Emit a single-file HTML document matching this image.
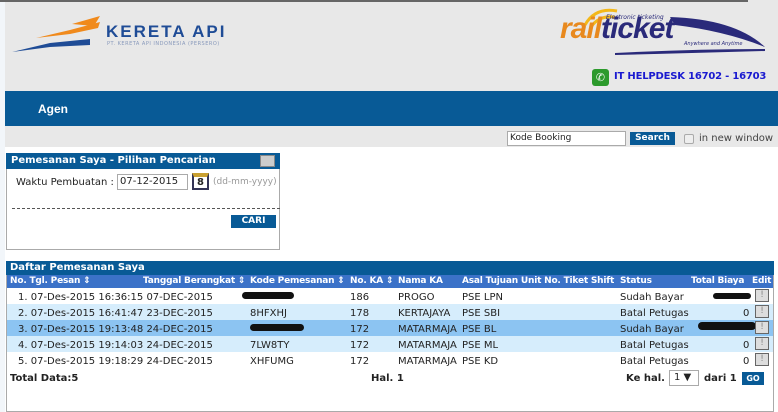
<!DOCTYPE html>
<html><head><meta charset="utf-8"><style>
*{margin:0;padding:0;box-sizing:border-box}
body{width:778px;height:412px;position:relative;background:#fff;font-family:"DejaVu Sans",Verdana,sans-serif;font-size:10px;color:#222;overflow:hidden}
.a{position:absolute;white-space:nowrap}
.b{font-weight:bold}
.h{position:absolute;top:276px;font-weight:bold;font-size:9px;color:#fff;white-space:nowrap;letter-spacing:-0.2px}
.e{position:absolute;left:755px;width:14px;height:13px;background:#ddd;border:1px solid #666;font-size:9px;text-align:center;line-height:11px;color:#888}
</style></head><body>
<div class="a" style="left:0;top:0;width:5px;height:412px;background:#f2f6fa"></div>
<div class="a" style="left:5px;top:0;width:773px;height:147px;background:#e8e8e8"></div>
<div class="a" style="left:0;top:0;width:748px;height:2px;background:#666"></div>
<svg class="a" style="left:10px;top:14px" width="90" height="40" viewBox="0 0 90 40">
<path d="M26 24 L60 16 L90 8 L88 14 L60 20 Z" fill="#f08a1c"/>
<path d="M62 10 L90 2 L84 12 Z" fill="#f08a1c"/>
<path d="M2 38 L40 29 L80 25 L80 31 L40 33 Z" fill="#1f4c96"/>
</svg>
<div class="a b" style="left:106px;top:22px;font-size:17px;color:#1f4c96;letter-spacing:2px;font-family:'Liberation Sans',sans-serif">KERETA API</div>
<div class="a" style="left:107px;top:41px;font-size:5px;color:#8899bb;letter-spacing:0.5px">PT. KERETA API INDONESIA (PERSERO)</div>
<svg class="a" style="left:575px;top:5px" width="200" height="52" viewBox="0 0 200 52">
<path d="M10 20 Q20 2 42 6" stroke="#f3b81a" stroke-width="3" fill="none"/>
<path d="M16 22 Q24 10 40 12" stroke="#f3b81a" stroke-width="3" fill="none"/>
<path d="M95 12 Q160 14 190 42 Q150 26 100 20 Z" fill="#2a2a7a"/>
<path d="M40 48 Q120 44 190 44 L190 46 Q120 48 40 50 Z" fill="#2a2a7a"/>
</svg>
<div class="a" style="left:560px;top:12px;font-size:30px;font-weight:bold;font-style:italic;font-family:'Liberation Sans',sans-serif;letter-spacing:-1px"><span style="color:#e8891e">rail</span><span style="color:#2a2a7a">ticket</span></div>
<div class="a" style="left:606px;top:14px;font-size:6px;font-style:italic;color:#2a2a7a">Electronic ticketing</div>
<div class="a" style="left:684px;top:41px;font-size:5px;font-style:italic;color:#2a2a7a">Anywhere and Anytime</div>
<div class="a" style="left:592px;top:69px;width:17px;height:17px;background:#2c9a2c;border-radius:3px;color:#fff;font-size:11px;text-align:center;line-height:17px">✆</div>
<div class="a b" style="left:614px;top:71px;font-size:10px;color:#1a1ad0;letter-spacing:-0.2px">IT HELPDESK 16702 - 16703</div>
<div class="a" style="left:5px;top:91px;width:773px;height:35px;background:#085a96"></div>
<div class="a b" style="left:38px;top:102px;font-size:12px;color:#fff;font-family:'Liberation Sans',sans-serif">Agen</div>
<div class="a" style="left:507px;top:131px;width:119px;height:15px;background:#fff;border:1px solid #aaa;font-size:9px;padding-left:2px;line-height:13px">Kode Booking</div>
<div class="a b" style="left:630px;top:132px;width:45px;height:13px;background:#085a96;color:#fff;font-size:9px;text-align:center;line-height:13px">Search</div>
<div class="a" style="left:684px;top:134px;width:10px;height:10px;border:1px solid #aaa;background:#eee;border-radius:2px"></div>
<div class="a" style="left:699px;top:133px;font-size:10px;color:#444">in new window</div>
<div class="a" style="left:6px;top:153px;width:274px;height:97px;border:1px solid #aaa;background:#fff"></div>
<div class="a" style="left:6px;top:153px;width:274px;height:16px;background:#085a96"></div>
<div class="a b" style="left:11px;top:155px;font-size:10px;color:#fff">Pemesanan Saya - Pilihan Pencarian</div>
<div class="a" style="left:260px;top:155px;width:15px;height:12px;background:#ccc;border:1px solid #888"></div>
<div class="a" style="left:16px;top:177px;font-size:10px">Waktu Pembuatan :</div>
<div class="a" style="left:117px;top:174px;width:71px;height:16px;border:1px solid #aaa;font-size:10px;padding-left:2px;line-height:14px">07-12-2015</div>
<div class="a b" style="left:192px;top:173px;width:17px;height:17px;background:#fff;border:2px solid #335;border-top:4px solid #c9a030;font-size:10px;text-align:center;line-height:11px">8</div>
<div class="a" style="left:213px;top:177px;font-size:9px;color:#999">(dd-mm-yyyy)</div>
<div class="a" style="left:12px;top:208px;width:268px;border-top:1px dashed #555"></div>
<div class="a b" style="left:231px;top:215px;width:45px;height:13px;background:#085a96;color:#fff;font-size:9px;text-align:center;line-height:13px">CARI</div>
<div class="a" style="left:6px;top:261px;width:768px;height:151px;border:1px solid #aaa;background:#fff"></div>
<div class="a" style="left:6px;top:261px;width:768px;height:14px;background:#085a96"></div>
<div class="a b" style="left:10px;top:262px;font-size:10px;color:#fff">Daftar Pemesanan Saya</div>
<div class="a" style="left:7px;top:275px;width:766px;height:13px;background:#3b72c8"></div>
<div class="h" style="left:10px">No. Tgl. Pesan ⇕</div>
<div class="h" style="left:143px">Tanggal Berangkat ⇕</div>
<div class="h" style="left:250px">Kode Pemesanan ⇕</div>
<div class="h" style="left:350px">No. KA ⇕</div>
<div class="h" style="left:398px">Nama KA</div>
<div class="h" style="left:462px">Asal Tujuan Unit No. Tiket Shift</div>
<div class="h" style="left:620px">Status</div>
<div class="h" style="left:691px">Total Biaya</div>
<div class="h" style="left:752px">Edit</div>
<div class="a" style="left:7px;top:304px;width:766px;height:16px;background:#d6edfc"></div>
<div class="a" style="left:7px;top:320px;width:766px;height:16px;background:#8cc4f2"></div>
<div class="a" style="left:7px;top:336px;width:766px;height:16px;background:#d6edfc"></div>
<div style="position:absolute;left:0;top:290px;font-size:10px;line-height:16px">
<div class="a" style="left:18px;top:0">1. 07-Des-2015 16:36:15 07-DEC-2015</div>
<div class="a" style="left:18px;top:16px">2. 07-Des-2015 16:41:47 23-DEC-2015</div>
<div class="a" style="left:18px;top:32px">3. 07-Des-2015 19:13:48 24-DEC-2015</div>
<div class="a" style="left:18px;top:48px">4. 07-Des-2015 19:14:03 24-DEC-2015</div>
<div class="a" style="left:18px;top:64px">5. 07-Des-2015 19:18:29 24-DEC-2015</div>
<div class="a" style="left:250px;top:16px">8HFXHJ</div>
<div class="a" style="left:250px;top:48px">7LW8TY</div>
<div class="a" style="left:250px;top:64px">XHFUMG</div>
<div class="a" style="left:350px;top:0">186</div><div class="a" style="left:350px;top:16px">178</div><div class="a" style="left:350px;top:32px">172</div><div class="a" style="left:350px;top:48px">172</div><div class="a" style="left:350px;top:64px">172</div>
<div class="a" style="left:398px;top:0">PROGO</div><div class="a" style="left:398px;top:16px">KERTAJAYA</div><div class="a" style="left:398px;top:32px">MATARMAJA</div><div class="a" style="left:398px;top:48px">MATARMAJA</div><div class="a" style="left:398px;top:64px">MATARMAJA</div>
<div class="a" style="left:462px;top:0">PSE LPN</div><div class="a" style="left:462px;top:16px">PSE SBI</div><div class="a" style="left:462px;top:32px">PSE BL</div><div class="a" style="left:462px;top:48px">PSE ML</div><div class="a" style="left:462px;top:64px">PSE KD</div>
<div class="a" style="left:620px;top:0">Sudah Bayar</div><div class="a" style="left:620px;top:16px">Batal Petugas</div><div class="a" style="left:620px;top:32px">Sudah Bayar</div><div class="a" style="left:620px;top:48px">Batal Petugas</div><div class="a" style="left:620px;top:64px">Batal Petugas</div>
<div class="a" style="left:743px;top:16px">0</div><div class="a" style="left:743px;top:48px">0</div><div class="a" style="left:743px;top:64px">0</div>
</div>
<div class="a" style="left:242px;top:292px;width:52px;height:7px;background:#111;border-radius:4px"></div>
<div class="a" style="left:250px;top:324px;width:54px;height:7px;background:#111;border-radius:4px"></div>
<div class="a" style="left:713px;top:293px;width:38px;height:6px;background:#111;border-radius:3px"></div>
<div class="a" style="left:698px;top:322px;width:58px;height:8px;background:#111;border-radius:4px"></div>
<div class="e" style="top:289px">!</div>
<div class="e" style="top:305px">!</div>
<div class="e" style="top:321px">!</div>
<div class="e" style="top:337px">!</div>
<div class="e" style="top:353px">!</div>
<div class="a b" style="left:10px;top:373px;font-size:10px">Total Data:5</div>
<div class="a b" style="left:371px;top:373px;font-size:10px">Hal. 1</div>
<div class="a b" style="left:626px;top:373px;font-size:10px">Ke hal.</div>
<div class="a" style="left:669px;top:370px;width:30px;height:16px;border:1px solid #aaa;background:#fff;font-size:10px;padding-left:4px;line-height:14px">1 ▼</div>
<div class="a b" style="left:704px;top:373px;font-size:10px">dari 1</div>
<div class="a b" style="left:742px;top:372px;width:22px;height:13px;background:#085a96;color:#fff;font-size:8px;text-align:center;line-height:13px">GO</div>
</body></html>
